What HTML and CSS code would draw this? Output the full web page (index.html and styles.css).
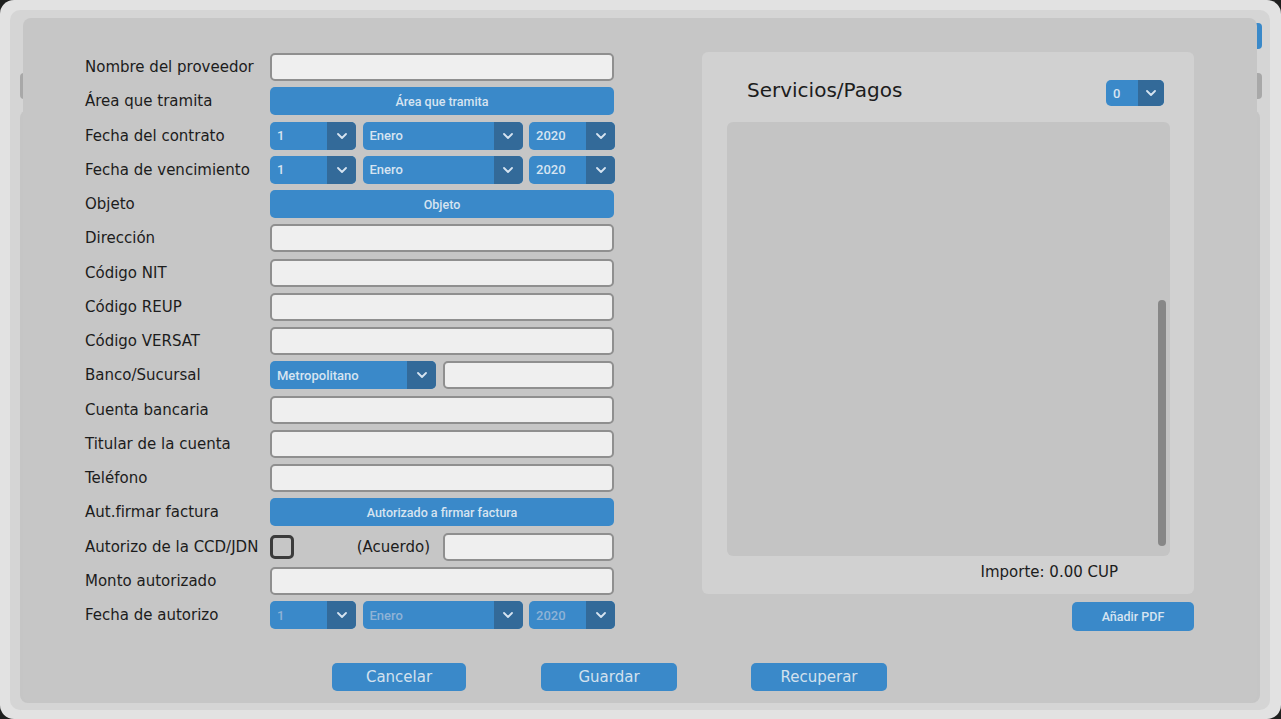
FILE: index.html
```html
<!DOCTYPE html>
<html lang="es">
<head>
<meta charset="utf-8">
<title>Proveedor</title>
<link rel="stylesheet" href="styles.css">
</head>
<body>
<div class="frame">
  <div class="layer">
    <div class="behind-panel"></div>
    <div class="peek peek-left"></div>
    <div class="peek peek-right-blue"></div>
    <div class="peek peek-right-gray"></div>
    <div class="dialog">
      <div class="content">
        <div class="form">
          <div class="lbl">Nombre del proveedor</div>
          <div class="inp"></div>

          <div class="lbl">Área que tramita</div>
          <div class="bbtn">Área que tramita</div>

          <div class="lbl">Fecha del contrato</div>
          <div class="date">
            <div class="sel"><span class="st">1</span><span class="sa"><svg width="10" height="6" viewBox="0 0 10 6"><path d="M1 1l4 4 4-4"/></svg></span></div>
            <div class="sel"><span class="st">Enero</span><span class="sa"><svg width="10" height="6" viewBox="0 0 10 6"><path d="M1 1l4 4 4-4"/></svg></span></div>
            <div class="sel"><span class="st">2020</span><span class="sa"><svg width="10" height="6" viewBox="0 0 10 6"><path d="M1 1l4 4 4-4"/></svg></span></div>
          </div>

          <div class="lbl">Fecha de vencimiento</div>
          <div class="date">
            <div class="sel"><span class="st">1</span><span class="sa"><svg width="10" height="6" viewBox="0 0 10 6"><path d="M1 1l4 4 4-4"/></svg></span></div>
            <div class="sel"><span class="st">Enero</span><span class="sa"><svg width="10" height="6" viewBox="0 0 10 6"><path d="M1 1l4 4 4-4"/></svg></span></div>
            <div class="sel"><span class="st">2020</span><span class="sa"><svg width="10" height="6" viewBox="0 0 10 6"><path d="M1 1l4 4 4-4"/></svg></span></div>
          </div>

          <div class="lbl">Objeto</div>
          <div class="bbtn">Objeto</div>

          <div class="lbl">Dirección</div>
          <div class="inp"></div>

          <div class="lbl">Código NIT</div>
          <div class="inp"></div>

          <div class="lbl">Código REUP</div>
          <div class="inp"></div>

          <div class="lbl">Código VERSAT</div>
          <div class="inp"></div>

          <div class="lbl">Banco/Sucursal</div>
          <div class="pair">
            <div class="sel"><span class="st">Metropolitano</span><span class="sa"><svg width="10" height="6" viewBox="0 0 10 6"><path d="M1 1l4 4 4-4"/></svg></span></div>
            <div class="inp"></div>
          </div>

          <div class="lbl">Cuenta bancaria</div>
          <div class="inp"></div>

          <div class="lbl">Titular de la cuenta</div>
          <div class="inp"></div>

          <div class="lbl">Teléfono</div>
          <div class="inp"></div>

          <div class="lbl">Aut.firmar factura</div>
          <div class="bbtn">Autorizado a firmar factura</div>

          <div class="lbl">Autorizo de la CCD/JDN</div>
          <div class="pair">
            <div class="chkcell"><span class="chk"></span><span class="lbl">(Acuerdo)</span></div>
            <div class="inp"></div>
          </div>

          <div class="lbl">Monto autorizado</div>
          <div class="inp"></div>

          <div class="lbl">Fecha de autorizo</div>
          <div class="date disabled">
            <div class="sel"><span class="st">1</span><span class="sa"><svg width="10" height="6" viewBox="0 0 10 6"><path d="M1 1l4 4 4-4"/></svg></span></div>
            <div class="sel"><span class="st">Enero</span><span class="sa"><svg width="10" height="6" viewBox="0 0 10 6"><path d="M1 1l4 4 4-4"/></svg></span></div>
            <div class="sel"><span class="st">2020</span><span class="sa"><svg width="10" height="6" viewBox="0 0 10 6"><path d="M1 1l4 4 4-4"/></svg></span></div>
          </div>
        </div>

        <div class="side">
          <div class="panel">
            <div class="phead">
              <div class="ptitle">Servicios/Pagos</div>
              <div class="sel small"><span class="st">0</span><span class="sa"><svg width="10" height="6" viewBox="0 0 10 6"><path d="M1 1l4 4 4-4"/></svg></span></div>
            </div>
            <div class="list"><div class="scroll"></div></div>
            <div class="importe">Importe: 0.00 CUP</div>
          </div>
          <div class="bbtn pdf">Añadir PDF</div>
        </div>
      </div>

      <div class="actions">
        <div class="abtn narrow">Cancelar</div>
        <div class="abtn">Guardar</div>
        <div class="abtn last">Recuperar</div>
      </div>
    </div>
  </div>
</div>
</body>
</html>
```

FILE: styles.css
```css
html, body {
  margin: 0;
  padding: 0;
  background: #1e1f1e;
  overflow: hidden;
}

.frame {
  width: 1281px;
  height: 719px;
  box-sizing: border-box;
  padding: 10px 11px 9px 10px;
  background: #e2e2e2;
  border-radius: 14px;
}

.layer {
  position: relative;
  height: 100%;
  box-sizing: border-box;
  padding: 8px 13px 7px 13px;
  background: #d5d5d5;
  border-radius: 10px;
}

.behind-panel {
  position: absolute;
  left: 10px;
  right: 10px;
  top: 100px;
  bottom: 7px;
  background: #c5c5c5;
  border-radius: 8px;
}

.peek {
  position: absolute;
  border-radius: 4px;
}
.peek-left {
  left: 10px;
  top: 63px;
  width: 8px;
  height: 26px;
  background: #a8a8a8;
}
.peek-right-blue {
  right: 8px;
  top: 13px;
  width: 10px;
  height: 26px;
  background: #3a89c9;
}
.peek-right-gray {
  right: 8px;
  top: 63px;
  width: 10px;
  height: 26px;
  background: #a8a8a8;
}

.dialog {
  position: relative;
  height: 100%;
  box-sizing: border-box;
  background: #c6c6c6;
  border-radius: 8px;
  padding: 34px 0 0 62px;
  display: flex;
  flex-direction: column;
}

.content {
  display: flex;
  align-items: flex-start;
  height: 579px;
}

.form {
  display: grid;
  grid-template-columns: 185px 344px;
  grid-auto-rows: 28px;
  row-gap: 6.25px;
  margin-top: 1px;
}

.lbl {
  font-family: "DejaVu Sans", sans-serif;
  font-size: 15px;
  color: #1c1c1c;
  display: flex;
  align-items: center;
  white-space: nowrap;
}

.inp {
  box-sizing: border-box;
  height: 28px;
  background: #efefef;
  border: 2px solid #8f8f8f;
  border-radius: 5px;
}

.bbtn {
  display: flex;
  align-items: center;
  justify-content: center;
  height: 28px;
  background: #3a89c9;
  border-radius: 5px;
  font-family: Roboto, sans-serif;
  font-weight: 500;
  font-size: 12.5px;
  color: #d6e4f1;
}

.date {
  display: grid;
  grid-template-columns: 86px 160px 86px;
  column-gap: 6.5px;
  width: 345px;
}

.sel {
  display: flex;
  height: 28px;
  background: #3a89c9;
  border-radius: 5px;
  overflow: hidden;
  font-family: Roboto, sans-serif;
  font-weight: 500;
  font-size: 13px;
  color: #d6e4f1;
}
.st {
  flex: 1;
  display: flex;
  align-items: center;
  padding-left: 7px;
}
.sa {
  width: 29px;
  display: flex;
  align-items: center;
  justify-content: center;
  background: #336a99;
}
.sa svg path {
  fill: none;
  stroke: #d6e4f1;
  stroke-width: 1.8;
  stroke-linecap: round;
  stroke-linejoin: round;
}
.disabled .st {
  color: #8fb3d6;
}

.pair {
  display: grid;
  grid-template-columns: 166px 171px;
  column-gap: 7px;
}

.chkcell {
  display: flex;
  align-items: center;
  justify-content: space-between;
  padding-right: 6px;
}
.chk {
  box-sizing: border-box;
  width: 24px;
  height: 24px;
  border: 3px solid #3b3b3b;
  border-radius: 5px;
}

.side {
  margin-left: 88px;
  width: 492px;
  display: flex;
  flex-direction: column;
}

.panel {
  box-sizing: border-box;
  height: 542px;
  background: #d1d1d1;
  border-radius: 6px;
  padding: 28px 24px 0 25px;
  display: flex;
  flex-direction: column;
}

.phead {
  display: flex;
  align-items: center;
  justify-content: space-between;
  height: 26px;
  padding: 0 6px 0 20px;
}
.ptitle {
  font-family: "DejaVu Sans", sans-serif;
  font-size: 20px;
  color: #1c1c1c;
  margin-top: -6px;
}
.sel.small {
  width: 58px;
  height: 26px;
}
.sel.small .sa {
  width: 26px;
}

.list {
  position: relative;
  margin-top: 16px;
  height: 434px;
  background: #c4c4c4;
  border-radius: 6px;
}
.scroll {
  position: absolute;
  right: 4px;
  top: 178px;
  width: 8px;
  height: 246px;
  background: #878787;
  border-radius: 4px;
}

.importe {
  margin-top: 7px;
  padding-right: 52px;
  text-align: right;
  font-family: "DejaVu Sans", sans-serif;
  font-size: 15px;
  line-height: 18px;
  color: #1c1c1c;
}

.bbtn.pdf {
  align-self: flex-end;
  width: 122px;
  height: 29px;
  margin-top: 8px;
}

.actions {
  display: flex;
  gap: 75px;
  margin-top: 32px;
  padding-left: 247px;
}
.abtn {
  width: 136px;
  height: 28px;
  display: flex;
  align-items: center;
  justify-content: center;
  background: #3a89c9;
  border-radius: 5px;
  font-family: "DejaVu Sans", sans-serif;
  font-size: 15px;
  color: #d3e1ee;
}
.abtn.narrow {
  width: 134px;
}
.abtn.last {
  margin-left: -1px;
}
```
